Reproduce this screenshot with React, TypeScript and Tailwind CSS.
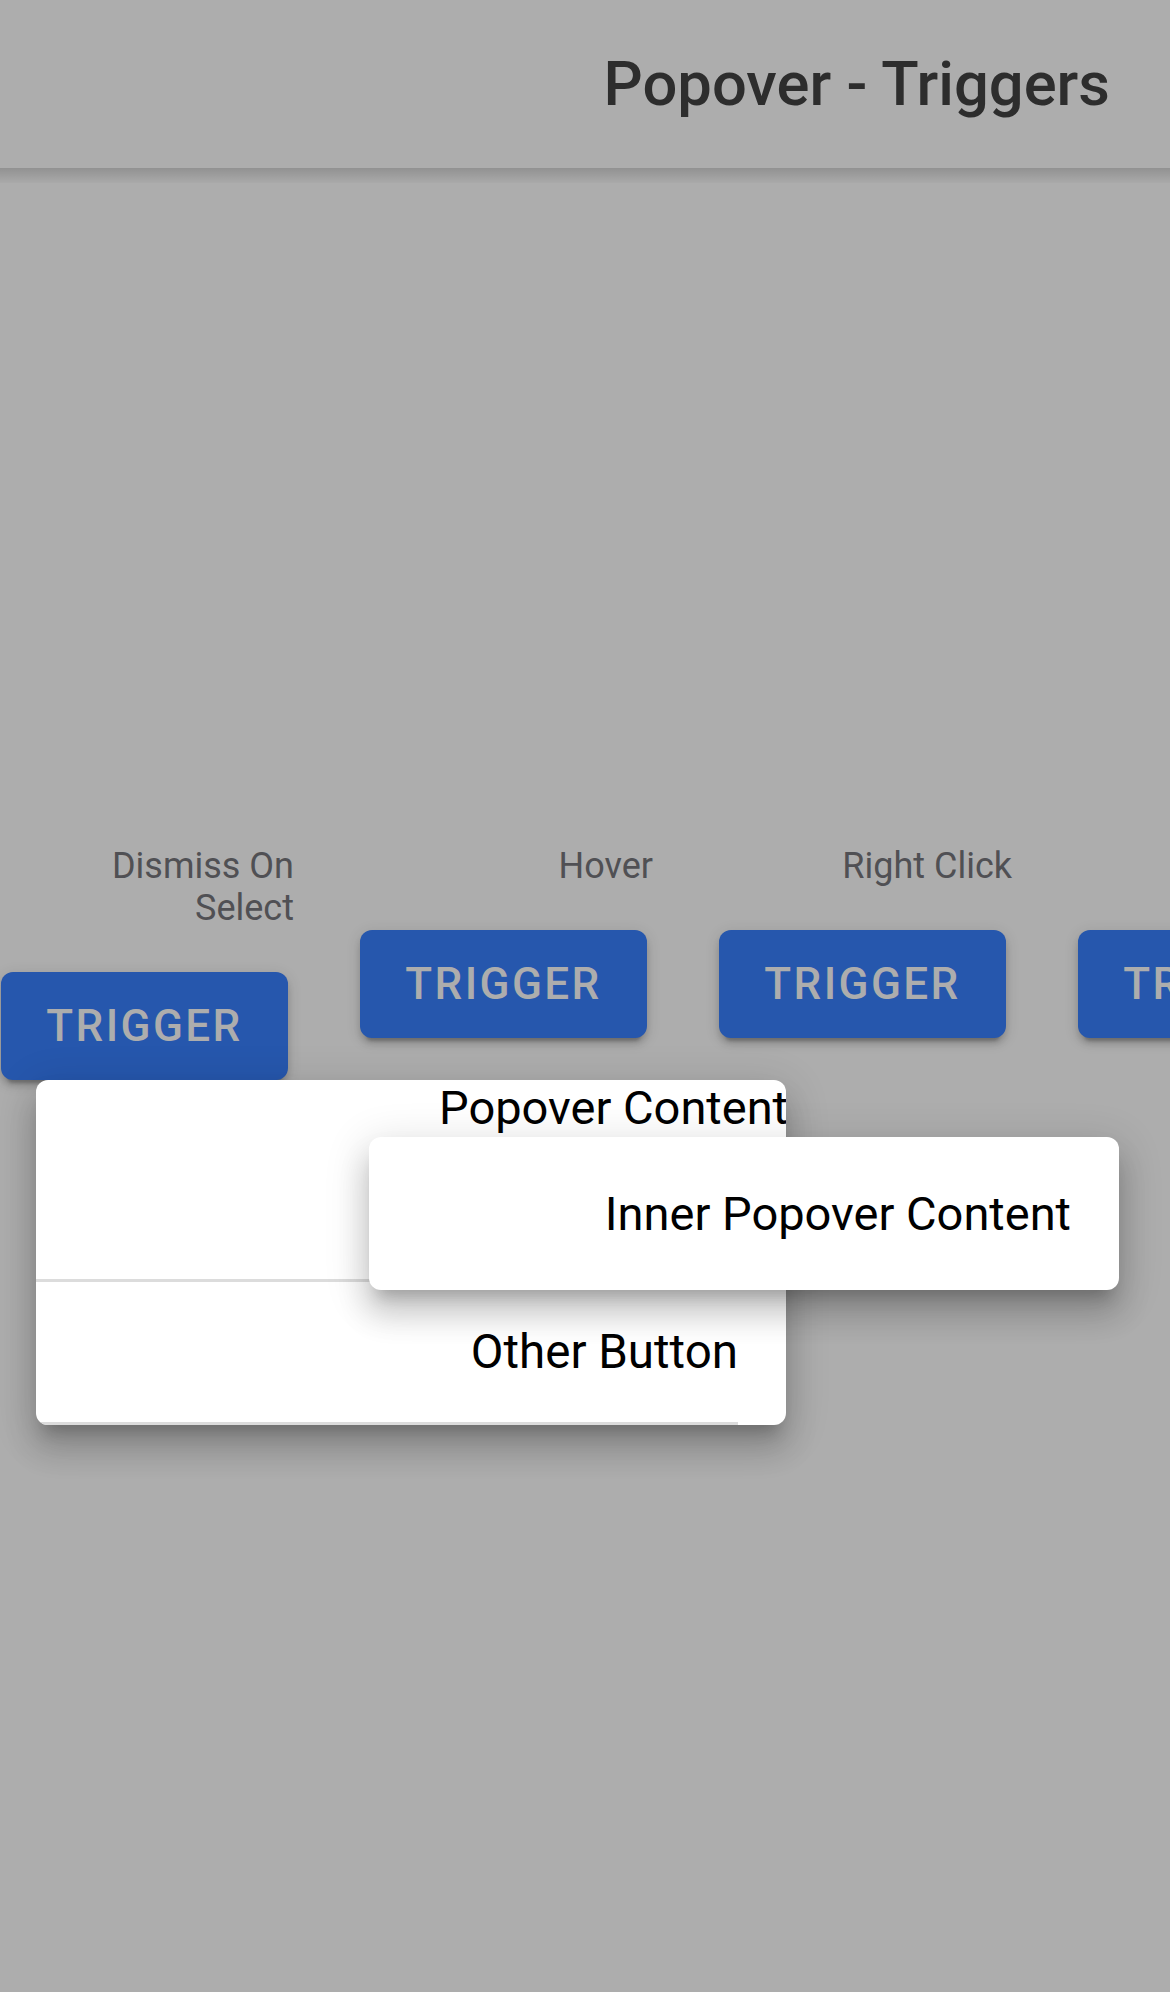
import React from "react";

const btnShadow =
  "shadow-[0_9px_3px_-6px_rgba(0,0,0,0.2),0_6px_6px_0_rgba(0,0,0,0.14),0_3px_15px_0_rgba(0,0,0,0.12)]";

function Column({ label, children }: { label?: React.ReactNode; children?: React.ReactNode }) {
  return (
    <div className="flex w-[299px] shrink-0 flex-col items-stretch">
      {label ? (
        <div className="text-right text-[36px] leading-[42px] text-[#505054]">{label}</div>
      ) : null}
      {children}
    </div>
  );
}

function TriggerButton() {
  return (
    <div
      className={`mt-[43px] mx-[6px] flex h-[108px] items-center justify-center rounded-[12px] bg-[#2657ad] ${btnShadow}`}
    >
      <span className="text-[44px] font-medium leading-none tracking-[2.4px] text-[#adadad]">TRIGGER</span>
    </div>
  );
}

export default function App() {
  return (
    <div className="relative h-[1992px] w-full overflow-hidden bg-[#adadad] font-[Roboto,sans-serif]">
      {/* Header */}
      <header className="relative z-10 flex h-[168px] items-center justify-end bg-[#adadad] pr-[60px]">
        <h1 className="text-[61.5px] font-medium leading-[70px] text-[#2d2d2d]">Popover - Triggers</h1>
      </header>
      <div className="h-[15px] w-full bg-gradient-to-b from-[rgba(0,0,0,0.16)] to-[rgba(0,0,0,0.02)]" />

      {/* Trigger row */}
      <main className="pt-[662px]">
        <div className="ml-[-5px] flex items-start gap-[60px]">
          <Column
            label={
              <>
                Dismiss On
                <br />
                Select
              </>
            }
          >
            <TriggerButton />
          </Column>
          <Column label="Hover">
            <TriggerButton />
          </Column>
          <Column label="Right Click">
            <TriggerButton />
          </Column>
          <Column label={<span className="invisible">Context</span>}>
            <TriggerButton />
          </Column>
        </div>
      </main>

      {/* Outer popover */}
      <div className="absolute left-[36px] top-[1080px] z-20 flex w-[750px] flex-col overflow-hidden rounded-[12px] bg-white shadow-[0_15px_15px_-9px_rgba(0,0,0,0.2),0_24px_30px_3px_rgba(0,0,0,0.14),0_9px_42px_6px_rgba(0,0,0,0.12)]">
        <div className="h-[199px]">
          <div className="mr-[-2px] text-right text-[47px] leading-[56px] text-black">Popover Content</div>
        </div>
        <div className="h-[3px] w-full bg-[#dcdcdc]" />
        <div className="pr-[48px]">
          <div className="flex h-[143px] items-center justify-end border-b-[3px] border-[#dcdcdc]">
            <span className="text-[47.5px] leading-[56px] text-black">Other Button</span>
          </div>
        </div>
      </div>

      {/* Inner popover */}
      <div className="absolute left-[369px] top-[1137px] z-30 flex h-[153px] w-[750px] items-center justify-end rounded-[12px] bg-white pr-[48px] shadow-[0_15px_15px_-9px_rgba(0,0,0,0.2),0_24px_30px_3px_rgba(0,0,0,0.14),0_9px_42px_6px_rgba(0,0,0,0.12)]">
        <span className="text-[47px] leading-[56px] text-black">Inner Popover Content</span>
      </div>
    </div>
  );
}
